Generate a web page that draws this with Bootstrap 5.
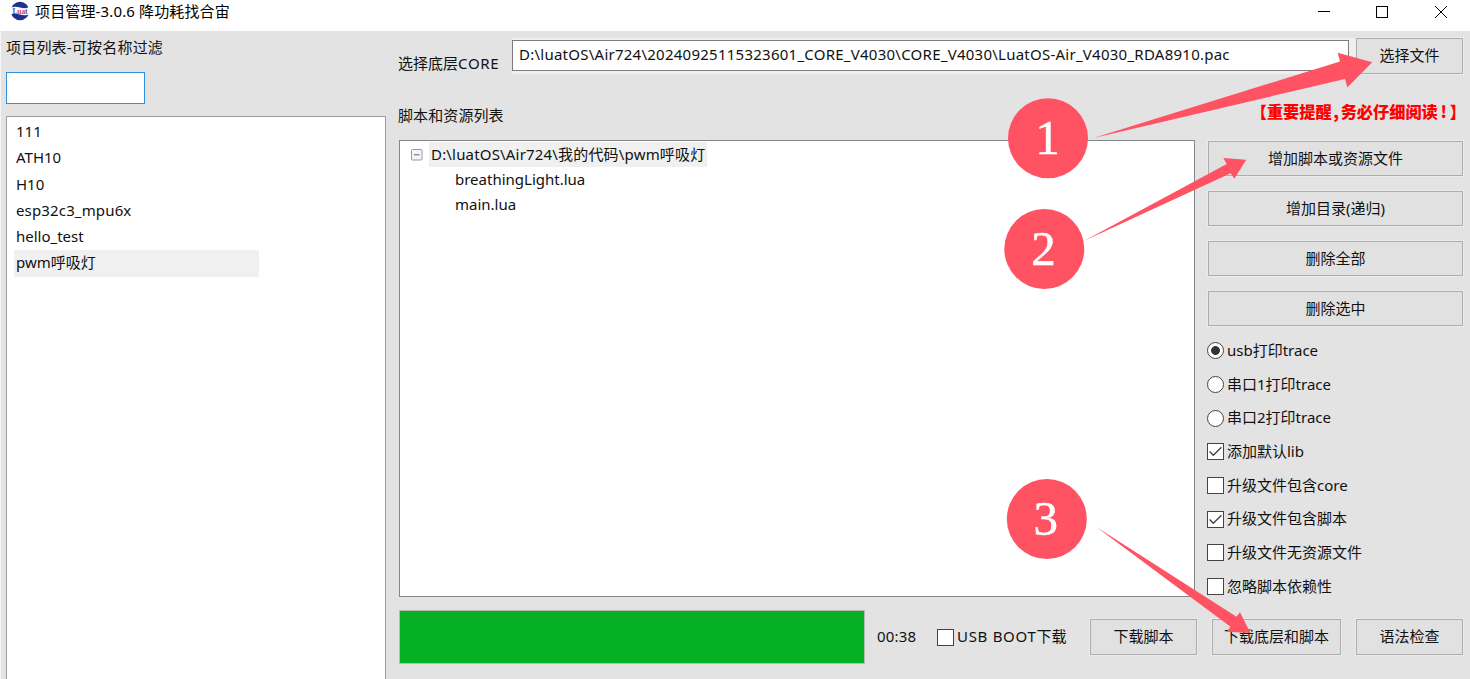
<!DOCTYPE html>
<html lang="zh-CN">
<head>
<meta charset="utf-8">
<title>项目管理-3.0.6 降功耗找合宙</title>
<link href="https://cdn.jsdelivr.net/npm/bootstrap@5.3.0/dist/css/bootstrap.min.css" rel="stylesheet">
<style>
body{width:1470px;height:679px;background:#e3e3e3;color:#111;font-family:"Noto Sans","Noto Sans CJK SC",sans-serif;font-size:15px;line-height:20px;white-space:nowrap}
.titlebar{height:31px;background:#fff;padding-left:9px;font-size:15px;color:#000}
.title-text{margin:1px 0 0 5px;letter-spacing:.14px}
.side{width:386px;padding-left:5px;border-left:1px solid #f6f6f6}
.side-label{height:41px;padding-top:6px;letter-spacing:.2px}
.filter{width:139px;height:32px;border:1.5px solid #2f8fdd;border-radius:0;padding:0}
.projects{width:380px;margin-top:12px;border:1px solid #9a9da6;border-bottom:0;background:#fff;padding:2px 0 0 7px}
.projects .list-group-item{height:26.25px;line-height:25px;width:245px;padding:0 0 0 2px;border:0;background:none;color:#111;border-radius:0}
.projects .chosen{background:#f0f0f0}
.workspace{width:1065px;margin-left:12px}
.core-row{height:43px;padding-top:7px}
.core-label{width:114px;padding-top:15px}
.latin{letter-spacing:.7px}
.core-wrap{width:844px;height:36px;background:#f0f0f0;padding-top:2px}
.core-field{width:837px;height:31px;border:1px solid #7c7c80;border-radius:0;padding:0 0 3px 6px;background:#fff;font-size:15px;letter-spacing:.25px;color:#111}
.winbtn{height:36px;border:1px solid #adadad;outline:1px solid #ebebeb;border-radius:0;background:#e1e1e1;color:#111;font-size:15px;line-height:20px;padding:0 0 3px}
.caption-row{height:66px}
.caption-text{padding-top:31px;letter-spacing:.1px}
.notice{color:#f00;font-family:"Noto Sans CJK SC",sans-serif;font-weight:900;font-size:16.2px;margin:27px -3px 0 0}
.notice span{display:inline-block;text-align:center}
.tree{width:796px;height:457px;margin-left:1px;border:1px solid #828790;background:#fff;padding:1px 0 0 11px}
.node{height:25px;line-height:24px}
.node-name{background:#f0f0f0;padding:0 2px;margin-left:6px;height:25px;letter-spacing:.18px}
.leaf{padding-left:44px}
.tools{width:255px;height:457px;gap:15px;padding-top:1px}
.tools .winbtn{height:35px;flex:none;padding-bottom:2px}
.opts{margin:-7px 0 0 -1px}
.opt{height:33.7px;gap:3px}
.opt-text{margin-top:-2px}
.form-check-input.tick{width:17px;height:17px;margin:0;border:1.5px solid #444;background-color:#fff;background-size:100%;flex:none}
.tick[type=checkbox]{border-radius:0}
.tick:checked[type=checkbox]{background-image:url("data:image/svg+xml,%3csvg xmlns='http://www.w3.org/2000/svg' viewBox='0 0 14 14'%3e%3cpath fill='none' stroke='%23444' stroke-width='1.3' d='M1.5 7l3.5 3.500L12.500 3'/%3e%3c/svg%3e")}
.tick:checked[type=radio]{background-image:radial-gradient(circle,#333 4px,transparent 4.800px)}
.foot{margin-top:13px;height:54px}
.meter{width:466px;height:54px;margin-left:1px;border:1px solid #b4bcb4;border-radius:0;background:#e6e6e6}
.meter .progress-bar{background:#06b025}
.clock{width:60px;margin:-2px 0 0 12px;letter-spacing:.2px}
.gap-btn{gap:15px}
.w-short{width:107px}
.w-long{width:129px}
.overlay{left:0;top:0;pointer-events:none}
</style>
</head>
<body class="overflow-hidden position-relative d-flex flex-column">
<header class="titlebar d-flex align-items-start">
  <svg width="21" height="21" viewBox="0 0 21 21"><circle cx="11" cy="11" r="9.200" fill="#20308f"/><path d="M0 8.200Q5 5.500 11 7.500T21 6.500V14.500Q16 16 11 14.500T0 15Z" fill="#fff"/><text x="3.500" y="13.500" font-family="Liberation Serif" font-weight="bold" font-size="7.500" textLength="15" fill="#404daa">L<tspan fill="#d04468">ua</tspan>t</text></svg>
  <span class="title-text">项目管理-3.0.6 降功耗找合宙</span>
  <svg class="ms-auto" width="155" height="30" viewBox="1315 0 155 30" fill="none" stroke="#000" shape-rendering="crispEdges"><path d="M1318 11.500h12M1376.500 6.500h11v11h-11z"/><path d="M1435 6l12 12M1447 6l-12 12" shape-rendering="auto"/></svg>
</header>
<main class="d-flex flex-fill">
  <aside class="side d-flex flex-column">
    <div class="side-label">项目列表-可按名称过滤</div>
    <input class="form-control filter shadow-none">
    <div class="projects list-group flex-fill rounded-0">
      <div class="list-group-item">111</div>
      <div class="list-group-item">ATH10</div>
      <div class="list-group-item">H10</div>
      <div class="list-group-item" style="letter-spacing:.15px">esp32c3_mpu6x</div>
      <div class="list-group-item">hello_test</div>
      <div class="list-group-item chosen">pwm呼吸灯</div>
    </div>
  </aside>
  <section class="workspace">
    <div class="core-row d-flex">
      <div class="core-label">选择底层<span class="latin">CORE</span></div>
      <div class="core-wrap"><input class="form-control core-field" value="D:\luatOS\Air724\20240925115323601_CORE_V4030\CORE_V4030\LuatOS-Air_V4030_RDA8910.pac"></div>
      <button class="btn winbtn flex-fill">选择文件</button>
    </div>
    <div class="caption-row d-flex justify-content-between">
      <div class="caption-text">脚本和资源列表</div>
      <div class="notice">【重要提醒<span style="width:9px">,</span>务必仔细阅读<span style="width:12px">!</span>】</div>
    </div>
    <div class="d-flex justify-content-between">
      <div class="tree">
        <div class="node d-flex align-items-center">
          <svg width="12" height="12" viewBox="0 0 12 12"><rect x=".5" y=".5" width="10.500" height="10.500" rx="1" fill="#f6f6f6" stroke="#999"/><path d="M3 5.800h5.500" stroke="#4560a8"/></svg>
          <span class="node-name">D:\luatOS\Air724\我的代码\pwm呼吸灯</span>
        </div>
        <div class="node leaf">breathingLight.lua</div>
        <div class="node leaf">main.lua</div>
      </div>
      <div class="tools d-flex flex-column">
        <button class="btn winbtn">增加脚本或资源文件</button>
        <button class="btn winbtn">增加目录(递归)</button>
        <button class="btn winbtn">删除全部</button>
        <button class="btn winbtn">删除选中</button>
        <div class="opts d-flex flex-column">
          <label class="opt d-flex align-items-center"><input type="radio" name="trace" class="form-check-input tick" checked><span class="opt-text">usb打印trace</span></label>
          <label class="opt d-flex align-items-center"><input type="radio" name="trace" class="form-check-input tick"><span class="opt-text">串口1打印trace</span></label>
          <label class="opt d-flex align-items-center"><input type="radio" name="trace" class="form-check-input tick"><span class="opt-text">串口2打印trace</span></label>
          <label class="opt d-flex align-items-center"><input type="checkbox" class="form-check-input tick" checked><span class="opt-text">添加默认lib</span></label>
          <label class="opt d-flex align-items-center"><input type="checkbox" class="form-check-input tick"><span class="opt-text">升级文件包含core</span></label>
          <label class="opt d-flex align-items-center"><input type="checkbox" class="form-check-input tick" checked><span class="opt-text">升级文件包含脚本</span></label>
          <label class="opt d-flex align-items-center"><input type="checkbox" class="form-check-input tick"><span class="opt-text">升级文件无资源文件</span></label>
          <label class="opt d-flex align-items-center"><input type="checkbox" class="form-check-input tick"><span class="opt-text">忽略脚本依赖性</span></label>
        </div>
      </div>
    </div>
    <div class="foot d-flex align-items-center">
      <div class="progress meter"><div class="progress-bar w-100"></div></div>
      <span class="clock">00:38</span>
      <label class="opt d-flex align-items-center"><input type="checkbox" class="form-check-input tick"><span class="opt-text"><span class="latin">USB BOOT</span>下载</span></label>
      <div class="d-flex ms-auto gap-btn">
        <button class="btn winbtn w-short">下载脚本</button>
        <button class="btn winbtn w-long">下载底层和脚本</button>
        <button class="btn winbtn w-short">语法检查</button>
      </div>
    </div>
  </section>
</main>
<svg class="overlay position-absolute" width="1470" height="679" viewBox="0 0 1470 679" fill="#ff5364">
  <path d="M1093.500 138L1340 61.500L1337.700 52.800L1372.300 62.300L1347.300 87.500L1345 79Z"/>
  <path d="M1084.300 240.700L1226.700 164L1223.300 158L1246.300 159.700L1234.300 178.700L1230.700 173.300Z"/>
  <path d="M1096 526.700L1236.500 616.700L1240 612.300L1250.300 633L1226.700 631.700L1230.500 626.700Z"/>
  <circle cx="1048" cy="138.300" r="40"/><circle cx="1044.300" cy="249" r="40"/><circle cx="1046.800" cy="519" r="40"/>
  <g fill="#fff" stroke="#fff" stroke-width=".5" font-family="Liberation Serif, serif" font-size="49" text-anchor="middle"><text x="1047.500" y="154">1</text><text x="1043.500" y="265">2</text><text x="1045.700" y="534.500">3</text></g>
</svg>
<script src="https://cdn.jsdelivr.net/npm/bootstrap@5.3.0/dist/js/bootstrap.bundle.min.js"></script>
</body>
</html>
